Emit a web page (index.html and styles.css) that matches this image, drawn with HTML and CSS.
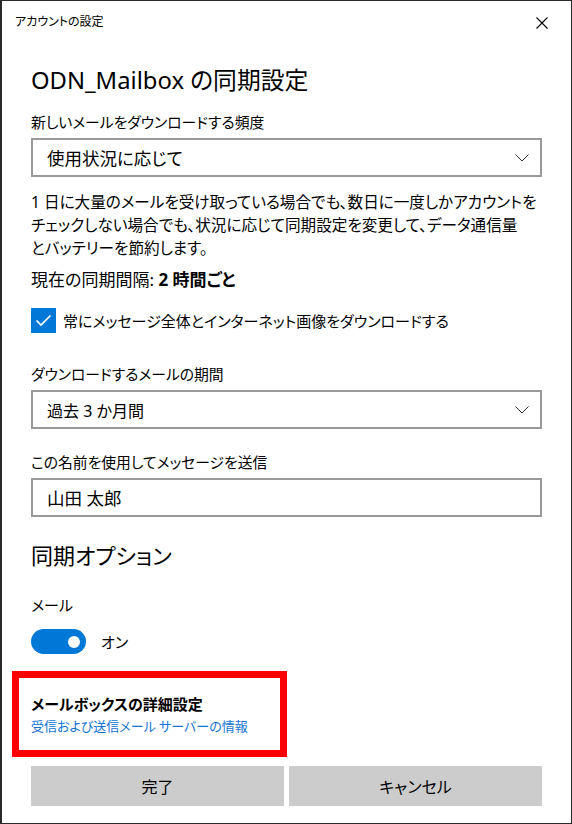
FILE: index.html
```html
<!DOCTYPE html>
<html lang="ja">
<head>
<meta charset="utf-8">
<title>アカウントの設定</title>
<link rel="stylesheet" href="styles.css">
</head>
<body>
<div class="window">
  <div class="titlebar">
    <span class="title">アカウントの設定</span>
    <svg class="close" width="12" height="12" viewBox="0 0 12 12"><path d="M0.5 0.5 L11.5 11.5 M11.5 0.5 L0.5 11.5" stroke="#000" stroke-width="1.1" fill="none"/></svg>
  </div>
  <div class="content">
    <h1 class="heading">ODN_Mailbox の同期設定</h1>
    <div class="label label-first">新しいメールをダウンロードする頻度</div>
    <div class="select">
      <span class="value value-lg">使用状況に応じて</span>
      <svg class="chevron" width="14" height="8" viewBox="0 0 14 8"><path d="M0.5 0.5 L7 7 L13.5 0.5" stroke="#333" stroke-width="1" fill="none"/></svg>
    </div>
    <p class="desc">1 日に大量のメールを受け取っている場合でも、数日に一度しかアカウントを<br>チェックしない場合でも、状況に応じて同期設定を変更して、データ通信量<br>とバッテリーを節約します。</p>
    <div class="current">現在の同期間隔: <b>2 時間ごと</b></div>
    <div class="check-row">
      <span class="checkbox"><svg width="25" height="25" viewBox="0 0 25 25"><path d="M5.5 12.5 L10 17 L19.5 7.5" stroke="#fff" stroke-width="1.7" fill="none"/></svg></span>
      <span>常にメッセージ全体とインターネット画像をダウンロードする</span>
    </div>
    <div class="label label-gap">ダウンロードするメールの期間</div>
    <div class="select">
      <span class="value value-md">過去 3 か月間</span>
      <svg class="chevron" width="14" height="8" viewBox="0 0 14 8"><path d="M0.5 0.5 L7 7 L13.5 0.5" stroke="#333" stroke-width="1" fill="none"/></svg>
    </div>
    <div class="label label-gap2">この名前を使用してメッセージを送信</div>
    <div class="select input"><span class="value value-lg">山田 太郎</span></div>
    <h2 class="subheading">同期オプション</h2>
    <div class="label label-mail">メール</div>
    <div class="toggle-row">
      <span class="toggle"><span class="knob"></span></span>
      <span>オン</span>
    </div>
    <div class="advanced">
      <div class="adv-title">メールボックスの詳細設定</div>
      <div class="adv-link">受信および送信メール サーバーの情報</div>
    </div>
    <div class="buttons">
      <button class="btn">完了</button>
      <button class="btn">キャンセル</button>
    </div>
  </div>
</div>
</body>
</html>
```

FILE: styles.css
```css
html, body {
  margin: 0;
  padding: 0;
  background: #fff;
}
body {
  font-family: "Noto Sans", "Noto Sans CJK JP", sans-serif;
  font-feature-settings: "palt";
  color: #000;
}
.window {
  width: 572px;
  height: 824px;
  box-sizing: border-box;
  border: 1px solid #2a2a2a;
  border-left-width: 2px;
  background: #fff;
}
.titlebar {
  height: 40px;
  display: flex;
  align-items: center;
  justify-content: space-between;
  padding: 0 23px 0 13px;
  box-sizing: border-box;
}
.title {
  font-size: 12px;
  line-height: 16px;
  margin-top: 2px;
}
.close {
  display: block;
  margin-top: 3px;
}
.content {
  padding: 0 29px 0 29px;
}
.heading {
  margin: 25px 0 0 0;
  font-size: 23.8px;
  font-weight: 400;
  line-height: 28px;
}
.label {
  font-size: 14.8px;
  line-height: 20px;
}
.label-first { margin-top: 18px; }
.label-gap { margin-top: 31px; }
.label-gap2 { margin-top: 23px; }
.label-mail { margin-top: 24px; font-size: 15px; }
.select {
  margin-top: 6px;
  height: 39px;
  box-sizing: border-box;
  border: 2px solid #999;
  display: flex;
  align-items: center;
  justify-content: space-between;
  padding: 0 11px 0 14px;
  font-size: 15px;
}
.value-lg {
  font-size: 17.5px;
}
.value-md {
  font-size: 16px;
}
.input {
  margin-top: 6px;
}
.chevron {
  display: block;
}
.desc {
  margin: 14px 0 0 0;
  font-size: 15.6px;
  line-height: 23px;
  white-space: nowrap;
}
.current {
  margin-top: 10px;
  font-size: 17px;
  line-height: 20px;
}
.current b {
  font-weight: 700;
}
.check-row {
  margin-top: 18px;
  display: flex;
  align-items: center;
  gap: 7px;
  font-size: 15px;
}
.checkbox {
  width: 25px;
  height: 25px;
  background: #0078d7;
  display: block;
}
.checkbox svg {
  display: block;
}
.subheading {
  margin: 22px 0 0 0;
  font-size: 22px;
  font-weight: 400;
  line-height: 32px;
}
.toggle-row {
  margin-top: 14px;
  display: flex;
  align-items: center;
  gap: 15px;
  font-size: 15px;
}
.toggle {
  width: 55px;
  height: 25px;
  border-radius: 13px;
  background: #0078d7;
  display: flex;
  align-items: center;
  justify-content: flex-end;
  padding: 0 6px;
  box-sizing: border-box;
}
.knob {
  width: 12px;
  height: 12px;
  border-radius: 50%;
  background: #fff;
}
.advanced {
  margin: 17px 0 0 -19px;
  width: 275px;
  box-sizing: border-box;
  border: 7px solid #ff0000;
  padding: 16px 0 14px 12px;
}
.adv-title {
  font-size: 15px;
  font-weight: 700;
  line-height: 20px;
}
.adv-link {
  margin-top: 2px;
  font-size: 13px;
  line-height: 20px;
  color: #1273d3;
}
.buttons {
  margin-top: 9px;
  display: grid;
  grid-template-columns: 1fr 1fr;
  gap: 5px;
}
.btn {
  height: 40px;
  border: none;
  background: #cccccc;
  font-family: inherit;
  font-feature-settings: "palt";
  font-size: 16px;
  color: #000;
  padding: 0;
}
```
